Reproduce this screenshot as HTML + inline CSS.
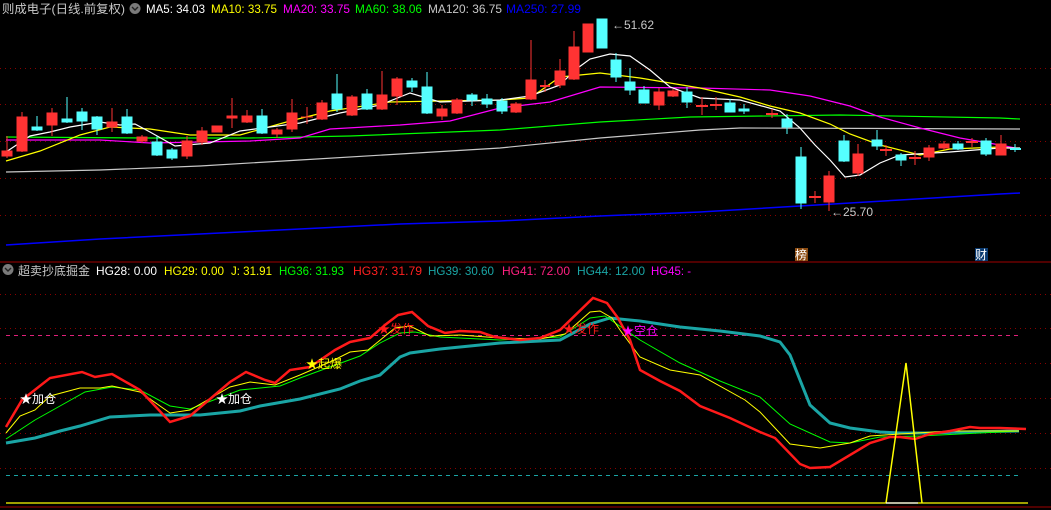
<!DOCTYPE html>
<html><head><meta charset="utf-8"><style>
html,body{margin:0;padding:0;background:#000;width:1051px;height:510px;overflow:hidden}
svg{display:block}
text{font-family:"Liberation Sans","Noto Sans CJK SC",sans-serif;font-size:12px}
</style></head><body>
<svg width="1051" height="510" viewBox="0 0 1051 510">
<g stroke="#8a0000" stroke-dasharray="1,4" stroke-width="1">
<line x1="0" y1="68.5" x2="1051" y2="68.5"/><line x1="0" y1="104.5" x2="1051" y2="104.5"/><line x1="0" y1="141.5" x2="1051" y2="141.5"/><line x1="0" y1="178.5" x2="1051" y2="178.5"/><line x1="0" y1="215.5" x2="1051" y2="215.5"/>
<line x1="0" y1="294.5" x2="1051" y2="294.5"/><line x1="0" y1="328.5" x2="1051" y2="328.5"/><line x1="0" y1="363.5" x2="1051" y2="363.5"/><line x1="0" y1="398.5" x2="1051" y2="398.5"/><line x1="0" y1="433.5" x2="1051" y2="433.5"/><line x1="0" y1="468.5" x2="1051" y2="468.5"/>
</g>
<line x1="6" y1="335.5" x2="1019" y2="335.5" stroke="#e0207a" stroke-dasharray="4,4"/>
<line x1="6" y1="475.5" x2="1019" y2="475.5" stroke="#1aa5a5" stroke-dasharray="4,4"/>
<line x1="6" y1="503" x2="1028" y2="503" stroke="#ffff00" stroke-width="1.3"/>
<line x1="0" y1="262" x2="1051" y2="262" stroke="#a00000"/>
<line x1="0" y1="507" x2="1051" y2="507" stroke="#a00000"/>
<g fill="none" stroke-width="1.2">
<polyline stroke="#0000ff" stroke-width="1.5" points="6,245 100,239 200,234 300,229 400,224 500,221 600,216 700,212 800,206 900,200 1000,194 1020,193"/>
<polyline stroke="#c8c8c8" points="6,172 100,170 200,166 300,160 400,154 500,148 600,138 700,130 740,128 1020,129"/>
<polyline stroke="#00ff00" points="6,137 150,138 250,138 350,136 450,132 500,130 600,122 690,117 840,115 1000,118 1020,119"/>
<polyline stroke="#ff00ff" points="6,140 100,140 150,143 250,141 300,138 330,129 400,125 450,121 500,108 550,102 600,87 700,88 770,90 810,96 850,106 880,117 920,128 960,138 1000,145 1020,149"/>
<polyline stroke="#ffff00" points="6,161 40,151 80,135 110,127 150,129 190,135 240,135 290,121 330,111 390,102 440,101 500,100 530,98 560,77 600,73 640,78 700,88 740,97 770,106 800,113 830,124 850,134 880,145 920,155 950,149 1000,147 1020,149"/>
<polyline stroke="#ffffff" points="6,152 30,136 50,132 70,127 100,122 120,125 135,124 150,132 175,146 210,143 240,131 300,123 340,113 380,105 410,93 440,102 500,100 530,96 560,85 575,70 590,59 610,54 630,56 650,70 670,87 700,98 740,100 780,111 800,128 815,145 830,160 845,177 860,175 880,163 900,155 950,152 1000,148 1020,148"/>
</g>
<g fill="#ff3333" stroke="#ff3333">
<line x1="7" y1="136" x2="7" y2="158"/><rect x="2" y="151" width="10" height="5"/>
<line x1="22" y1="112" x2="22" y2="152"/><rect x="17" y="117" width="10" height="34"/>
<line x1="52" y1="108" x2="52" y2="136"/><rect x="47" y="113" width="10" height="12"/>
<line x1="112" y1="108" x2="112" y2="132"/><rect x="107" y="122" width="10" height="5"/>
<line x1="142" y1="135" x2="142" y2="143"/><rect x="137" y="137" width="10" height="4"/>
<line x1="187" y1="136" x2="187" y2="159"/><rect x="182" y="141" width="10" height="15"/>
<line x1="202" y1="127" x2="202" y2="145"/><rect x="197" y="131" width="10" height="11"/>
<rect x="212" y="126" width="10" height="6"/>
<line x1="232" y1="98" x2="232" y2="128"/><rect x="227" y="116" width="10" height="2"/>
<line x1="247" y1="110" x2="247" y2="123"/><rect x="242" y="116" width="10" height="6"/>
<line x1="277" y1="128" x2="277" y2="138"/><rect x="272" y="130" width="10" height="4"/>
<line x1="292" y1="99" x2="292" y2="132"/><rect x="287" y="113" width="10" height="16"/>
<line x1="307" y1="107" x2="307" y2="124"/><line x1="301" y1="117" x2="313" y2="117"/>
<line x1="322" y1="100" x2="322" y2="120"/><rect x="317" y="103" width="10" height="16"/>
<line x1="352" y1="95" x2="352" y2="116"/><rect x="347" y="97" width="10" height="18"/>
<line x1="382" y1="71" x2="382" y2="110"/><rect x="377" y="95" width="10" height="14"/>
<line x1="397" y1="77" x2="397" y2="105"/><rect x="392" y="79" width="10" height="17"/>
<line x1="442" y1="105" x2="442" y2="120"/><rect x="437" y="109" width="10" height="7"/>
<line x1="457" y1="98" x2="457" y2="114"/><rect x="452" y="100" width="10" height="13"/>
<line x1="516" y1="102" x2="516" y2="113"/><rect x="511" y="104" width="10" height="8"/>
<line x1="531" y1="40" x2="531" y2="100"/><rect x="526" y="80" width="10" height="19"/>
<line x1="545" y1="80" x2="545" y2="92"/><line x1="540" y1="86" x2="550" y2="86" stroke-width="2"/>
<line x1="560" y1="59" x2="560" y2="88"/><rect x="555" y="71" width="10" height="14"/>
<line x1="574" y1="31" x2="574" y2="80"/><rect x="569" y="47" width="10" height="32"/>
<rect x="583" y="24" width="10" height="28"/>
<line x1="659" y1="88" x2="659" y2="110"/><rect x="654" y="92" width="10" height="13"/>
<line x1="673" y1="89" x2="673" y2="97"/><rect x="668" y="91" width="10" height="5"/>
<line x1="702" y1="97" x2="702" y2="115"/><line x1="696" y1="106" x2="708" y2="106" stroke-width="2"/>
<line x1="716" y1="97" x2="716" y2="110"/><line x1="710" y1="105" x2="722" y2="105" stroke-width="2"/>
<line x1="772" y1="109" x2="772" y2="118"/><line x1="766" y1="114" x2="778" y2="114" stroke-width="2"/>
<line x1="815" y1="191" x2="815" y2="203"/><line x1="809" y1="197" x2="821" y2="197" stroke-width="2"/>
<line x1="829" y1="171" x2="829" y2="211"/><rect x="824" y="176" width="10" height="26"/>
<line x1="858" y1="144" x2="858" y2="176"/><rect x="853" y="154" width="10" height="19"/>
<line x1="886" y1="145" x2="886" y2="156"/><line x1="880" y1="150" x2="892" y2="150" stroke-width="2"/>
<line x1="915" y1="151" x2="915" y2="165"/><line x1="909" y1="158" x2="921" y2="158" stroke-width="2"/>
<line x1="929" y1="145" x2="929" y2="161"/><rect x="924" y="148" width="10" height="9"/>
<line x1="944" y1="141" x2="944" y2="150"/><rect x="939" y="144" width="10" height="4"/>
<line x1="972" y1="138" x2="972" y2="147"/><line x1="966" y1="142" x2="978" y2="142" stroke-width="2"/>
<line x1="1001" y1="135" x2="1001" y2="155"/><rect x="996" y="144" width="10" height="11"/>
</g>
<g fill="#55ffff" stroke="#55ffff">
<line x1="37" y1="116" x2="37" y2="131"/><rect x="32" y="127" width="10" height="3"/>
<line x1="67" y1="97" x2="67" y2="123"/><rect x="62" y="119" width="10" height="3"/>
<line x1="82" y1="108" x2="82" y2="130"/><rect x="77" y="112" width="10" height="9"/>
<line x1="97" y1="116" x2="97" y2="135"/><rect x="92" y="117" width="10" height="12"/>
<line x1="127" y1="109" x2="127" y2="134"/><rect x="122" y="117" width="10" height="16"/>
<line x1="157" y1="136" x2="157" y2="156"/><rect x="152" y="142" width="10" height="13"/>
<line x1="172" y1="148" x2="172" y2="160"/><rect x="167" y="150" width="10" height="8"/>
<line x1="262" y1="109" x2="262" y2="134"/><rect x="257" y="116" width="10" height="17"/>
<line x1="337" y1="74" x2="337" y2="112"/><rect x="332" y="94" width="10" height="15"/>
<line x1="367" y1="89" x2="367" y2="110"/><rect x="362" y="94" width="10" height="15"/>
<line x1="412" y1="78" x2="412" y2="92"/><rect x="407" y="81" width="10" height="6"/>
<line x1="427" y1="72" x2="427" y2="114"/><rect x="422" y="87" width="10" height="26"/>
<line x1="472" y1="93" x2="472" y2="106"/><rect x="467" y="95" width="10" height="5"/>
<line x1="487" y1="94" x2="487" y2="108"/><rect x="482" y="99" width="10" height="5"/>
<line x1="502" y1="98" x2="502" y2="114"/><rect x="497" y="101" width="10" height="10"/>
<rect x="597" y="19" width="10" height="29"/>
<line x1="616" y1="53" x2="616" y2="82"/><rect x="611" y="60" width="10" height="17"/>
<line x1="630" y1="68" x2="630" y2="95"/><rect x="625" y="82" width="10" height="8"/>
<line x1="644" y1="86" x2="644" y2="103"/><rect x="639" y="90" width="10" height="13"/>
<line x1="687" y1="87" x2="687" y2="108"/><rect x="682" y="92" width="10" height="10"/>
<line x1="730" y1="99" x2="730" y2="112"/><rect x="725" y="103" width="10" height="9"/>
<line x1="744" y1="104" x2="744" y2="114"/><rect x="739" y="109" width="10" height="2"/>
<line x1="787" y1="114" x2="787" y2="134"/><rect x="782" y="119" width="10" height="8"/>
<line x1="801" y1="147" x2="801" y2="209"/><rect x="796" y="157" width="10" height="46"/>
<line x1="844" y1="135" x2="844" y2="162"/><rect x="839" y="141" width="10" height="20"/>
<line x1="877" y1="130" x2="877" y2="150"/><rect x="872" y="140" width="10" height="6"/>
<line x1="901" y1="153" x2="901" y2="166"/><rect x="896" y="155" width="10" height="5"/>
<line x1="958" y1="141" x2="958" y2="150"/><rect x="953" y="144" width="10" height="5"/>
<line x1="986" y1="138" x2="986" y2="156"/><rect x="981" y="141" width="10" height="13"/>
<line x1="1015" y1="144" x2="1015" y2="152"/><line x1="1010" y1="149" x2="1021" y2="149" stroke-width="2"/>
</g>
<text x="612" y="29" fill="#c8c8c8" font-size="13">←51.62</text>
<text x="831" y="216" fill="#c8c8c8" font-size="13">←25.70</text>
<rect x="795" y="248" width="13" height="13" fill="#8a4a10"/><text x="795" y="259" fill="#fff">榜</text>
<rect x="975" y="248" width="13" height="13" fill="#0a3a70"/><text x="975" y="259" fill="#fff">财</text>
<text x="2" y="13" fill="#c8c8c8" font-size="13" textLength="123" lengthAdjust="spacingAndGlyphs">则成电子(日线.前复权)</text>
<text x="146" y="13" fill="#fff" textLength="59" lengthAdjust="spacingAndGlyphs">MA5: 34.03</text>
<text x="211" y="13" fill="#ffff00" textLength="66" lengthAdjust="spacingAndGlyphs">MA10: 33.75</text>
<text x="283" y="13" fill="#ff00ff" textLength="67" lengthAdjust="spacingAndGlyphs">MA20: 33.75</text>
<text x="355" y="13" fill="#00ff00" textLength="67" lengthAdjust="spacingAndGlyphs">MA60: 38.06</text>
<text x="428" y="13" fill="#c8c8c8" textLength="74" lengthAdjust="spacingAndGlyphs">MA120: 36.75</text>
<text x="506" y="13" fill="#0000ff" textLength="75" lengthAdjust="spacingAndGlyphs">MA250: 27.99</text>
<text x="18" y="275" fill="#c8c8c8" font-size="13" textLength="72" lengthAdjust="spacingAndGlyphs">超卖抄底掘金</text>
<text x="96" y="275" fill="#fff" textLength="61" lengthAdjust="spacingAndGlyphs">HG28: 0.00</text>
<text x="164" y="275" fill="#ffff00" textLength="60" lengthAdjust="spacingAndGlyphs">HG29: 0.00</text>
<text x="231" y="275" fill="#ffff00" textLength="41" lengthAdjust="spacingAndGlyphs">J: 31.91</text>
<text x="279" y="275" fill="#00ff00" textLength="65" lengthAdjust="spacingAndGlyphs">HG36: 31.93</text>
<text x="353" y="275" fill="#ff2020" textLength="69" lengthAdjust="spacingAndGlyphs">HG37: 31.79</text>
<text x="428" y="275" fill="#1aa5a5" textLength="66" lengthAdjust="spacingAndGlyphs">HG39: 30.60</text>
<text x="502" y="275" fill="#ff2080" textLength="68" lengthAdjust="spacingAndGlyphs">HG41: 72.00</text>
<text x="577" y="275" fill="#1aa5a5" textLength="68" lengthAdjust="spacingAndGlyphs">HG44: 12.00</text>
<text x="651" y="275" fill="#ff00ff" textLength="40" lengthAdjust="spacingAndGlyphs">HG45: -</text>
<circle cx="135" cy="8.5" r="5.5" fill="#7a7a7a"/><path d="M132 7l3 3 3-3" stroke="#222" fill="none" stroke-width="1.4"/>
<circle cx="8" cy="269.5" r="5.5" fill="#7a7a7a"/><path d="M5 268l3 3 3-3" stroke="#222" fill="none" stroke-width="1.4"/>
<g fill="none">
<polyline stroke="#1aa5a5" stroke-width="3" points="6,443 35,438 60,431 80,426 110,417 150,415 200,415 240,411 260,406 300,399 340,389 360,381 380,375 400,357 410,353 440,349 500,343 560,340 590,324 610,318 640,321 680,327 720,331 760,336 780,342 790,355 810,405 830,423 850,428 880,432 900,433 930,433 960,432 1019,431"/>
<polyline stroke="#00ff00" stroke-width="1" points="6,439 35,420 60,406 85,392 112,387 140,390 170,406 190,409 240,390 280,386 300,378 330,367 360,356 380,343 400,333 415,332 440,337 500,340 560,337 590,318 605,316 640,340 680,363 720,381 760,397 790,424 830,442 850,443 880,437 920,436 1019,431"/>
<polyline stroke="#ffff00" stroke-width="1" points="6,433 20,416 35,410 50,396 80,388 100,388 112,386 140,392 170,413 190,410 230,387 250,382 275,385 300,375 330,362 350,352 368,350 395,328 410,326 430,336 460,335 500,338 540,339 565,334 590,312 600,311 612,318 620,330 640,357 670,370 700,375 745,400 760,412 790,444 820,448 850,443 870,436 900,434 950,431 1019,431"/>
<polyline stroke="#ff1a1a" stroke-width="2.5" points="6,427 22,400 50,378 82,372 95,377 112,374 140,390 170,422 190,416 230,382 246,372 265,380 275,383 290,370 310,367 335,350 350,342 370,338 385,325 398,315 412,312 428,326 445,333 460,331 480,332 495,337 520,340 540,338 560,330 593,298 607,303 618,318 630,340 640,370 660,381 680,391 700,406 730,418 760,432 775,438 800,464 810,468 830,467 870,443 890,437 900,437 915,439 930,434 950,431 970,427 980,428 1000,428 1026,429"/>
<polyline stroke="#ffff00" stroke-width="1.5" points="886,503 906,363 922,503"/>
<line x1="886" y1="503" x2="918" y2="503" stroke="#fff" stroke-width="1.3"/>
</g>
<text x="20" y="403" fill="#fff" font-size="13">★加仓</text>
<text x="216" y="403" fill="#fff" font-size="13">★加仓</text>
<text x="306" y="368" fill="#ffff00" font-size="13">★起爆</text>
<text x="378" y="333" fill="#ff1a1a" font-size="13">★发作</text>
<text x="563" y="333" fill="#ff1a1a" font-size="13">★发作</text>
<text x="622" y="335" fill="#ff00ff" font-size="13">★空仓</text>
</svg>
</body></html>
